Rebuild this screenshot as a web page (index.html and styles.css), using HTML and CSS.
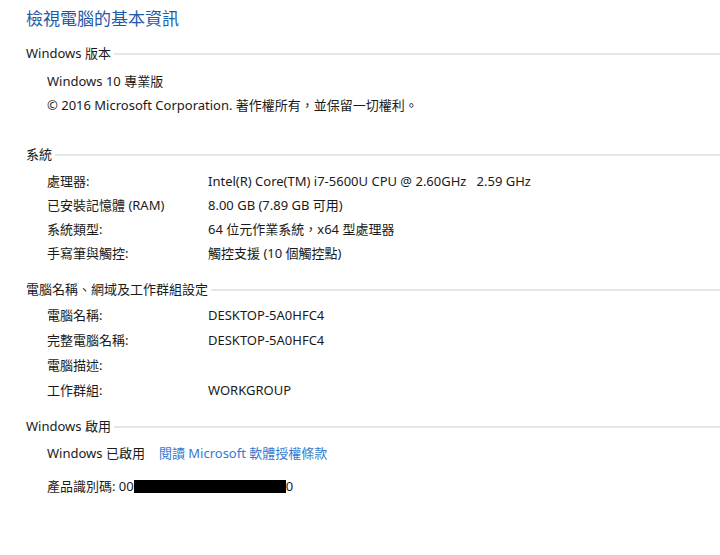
FILE: index.html
```html
<!DOCTYPE html>
<html lang="zh-Hant">
<head>
<meta charset="utf-8">
<link rel="stylesheet" href="styles.css">
</head>
<body>
<div class="page">
  <h1 class="title">檢視電腦的基本資訊</h1>

  <div class="section-head s1"><span>Windows 版本</span><i class="rule"></i></div>
  <div class="plain first">Windows 10 專業版</div>
  <div class="plain">© 2016 Microsoft Corporation. 著作權所有，並保留一切權利。</div>

  <div class="section-head s2"><span>系統</span><i class="rule"></i></div>
  <div class="grid g24">
    <div>處理器:</div><div>Intel(R) Core(TM) i7-5600U CPU @ 2.60GHz&nbsp;&nbsp; 2.59 GHz</div>
    <div>已安裝記憶體 (RAM)</div><div>8.00 GB (7.89 GB 可用)</div>
    <div>系統類型:</div><div>64 位元作業系統，x64 型處理器</div>
    <div>手寫筆與觸控:</div><div>觸控支援 (10 個觸控點)</div>
  </div>

  <div class="section-head s3"><span>電腦名稱、網域及工作群組設定</span><i class="rule"></i></div>
  <div class="grid g25">
    <div>電腦名稱:</div><div>DESKTOP-5A0HFC4</div>
    <div>完整電腦名稱:</div><div>DESKTOP-5A0HFC4</div>
    <div>電腦描述:</div><div></div>
    <div>工作群組:</div><div>WORKGROUP</div>
  </div>

  <div class="section-head s4"><span>Windows 啟用</span><i class="rule"></i></div>
  <div class="plain act">Windows 已啟用<a class="link" href="#">閱讀 Microsoft 軟體授權條款</a></div>
  <div class="plain pid">產品識別碼: 00<span class="redact"></span>0</div>
</div>
</body>
</html>
```

FILE: styles.css
```css
html, body {
  margin: 0;
  padding: 0;
  background: #ffffff;
}
body {
  font-family: "Noto Sans", "Noto Sans CJK TC", sans-serif;
  font-size: 13px;
  color: #1a1a1a;
}
.page {
  padding: 8px 0 0 26px;
}
.title {
  margin: 0;
  font-size: 17px;
  line-height: 22px;
  font-weight: normal;
  color: #1f5aa6;
}
.section-head {
  display: flex;
  align-items: center;
  height: 20px;
  line-height: 20px;
}
.section-head .rule {
  flex: 1;
  height: 0;
  border-top: 2px solid #e6e6e6;
  margin-left: 3px;
  margin-top: 2px;
}
.s1 { margin-top: 13px; }
.s2 { margin-top: 27px; }
.s3 { margin-top: 14px; }
.s4 { margin-top: 13px; }
.plain {
  padding-left: 21px;
  line-height: 24px;
  height: 24px;
  white-space: nowrap;
}
.plain.first { margin-top: 6px; }
.grid {
  display: grid;
  grid-template-columns: 161px auto;
  padding-left: 21px;
  white-space: nowrap;
}
.g24 { grid-auto-rows: 24px; line-height: 24px; margin-top: 5px; }
.g25 { grid-auto-rows: 25px; line-height: 25px; margin-top: 4px; }
.act { margin-top: 5px; }
.link {
  color: #3579cf;
  text-decoration: none;
  margin-left: 14px;
}
.pid { margin-top: 9px; }
.redact {
  display: inline-block;
  width: 152px;
  height: 13px;
  background: #000;
  vertical-align: -2px;
}
```
